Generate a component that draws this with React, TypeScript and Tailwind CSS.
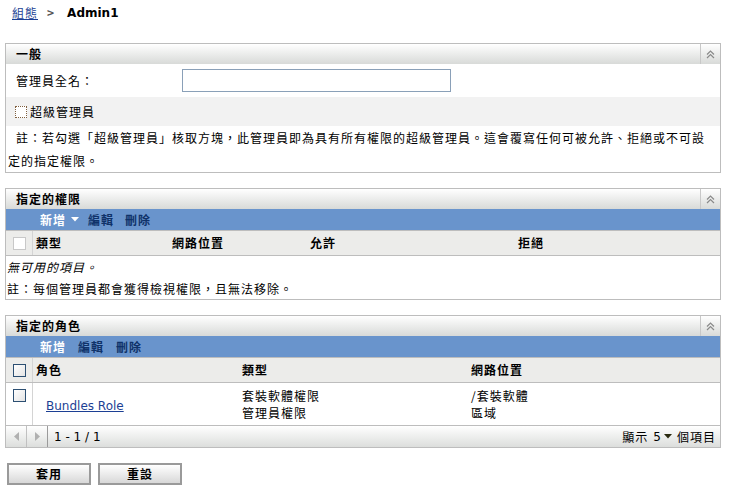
// Admin detail page — general info, assigned rights and assigned roles panels
import type { ReactNode } from 'react'

const font = { fontFamily: '"Noto Sans CJK TC", "Liberation Sans", sans-serif' }
const latin = { fontFamily: '"DejaVu Sans", sans-serif', letterSpacing: 0 }

function CollapseButton() {
  return (
    <div className="flex w-[20px] items-center justify-center self-stretch border-l border-[#c8c8c8]">
      <svg width="9" height="9" viewBox="0 0 9 9" fill="none" stroke="#8a8a8a" strokeWidth="1.2">
        <path d="M1 4.5 L4.5 1 L8 4.5" />
        <path d="M1 8 L4.5 4.5 L8 8" />
      </svg>
    </div>
  )
}

function Panel({ title, children }: { title: string; children: ReactNode }) {
  return (
    <section className="ml-[5px] mr-[9px] border border-[#bdbdbd] bg-white">
      <div className="flex h-[20px] items-center bg-gradient-to-b from-white to-[#d8dad8]">
        <h3 className="flex-1 pl-[10px] text-[12px] font-bold text-black">{title}</h3>
        <CollapseButton />
      </div>
      {children}
    </section>
  )
}

function Box({ tone = 'gray' }: { tone?: 'gray' | 'blue' }) {
  return (
    <span
      className={
        tone === 'blue'
          ? 'block h-[13px] w-[13px] border border-[#2c4f72] bg-gradient-to-br from-white to-[#e4e4e4]'
          : 'block h-[13px] w-[13px] border border-[#c8c8c8] bg-white'
      }
    />
  )
}

function Toolbar({ dropdown }: { dropdown?: boolean }) {
  return (
    <div className="flex h-[22px] items-center border-b border-[#bdbdbd] bg-[#6994cc] pl-[34px] text-[12px] font-bold tracking-[1px]">
      <span className="text-white">新增</span>
      {dropdown && (
        <svg className="ml-[5px]" width="8" height="5" viewBox="0 0 8 5">
          <path d="M0 0 H8 L4 4.5 Z" fill="#fff" />
        </svg>
      )}
      <span className={dropdown ? 'ml-[9px] text-[#0f3269]' : 'ml-[12px] text-[#0f3269]'}>編輯</span>
      <span className={dropdown ? 'ml-[11px] text-[#0f3269]' : 'ml-[12px] text-[#0f3269]'}>刪除</span>
    </div>
  )
}

export default function App() {
  return (
    <div className="min-h-[495px] w-[730px] bg-white pt-[4px] text-[12px] tracking-[1px] text-black" style={font}>
      <div className="flex items-center pl-[12px] leading-[18px]">
        <a className="text-[#1c3f94] underline">組態</a>
        <span className="ml-[9px] text-[#555] font-bold">&gt;</span>
        <span className="ml-[12px] font-bold" style={latin}>
          Admin1
        </span>
      </div>

      <div className="mt-[21px]">
        <Panel title="一般">
          <div className="flex h-[33px] items-center">
            <span className="w-[176px] pl-[10px]">管理員全名：</span>
            <input className="h-[23px] w-[269px] border border-[#8aa0b8] bg-white outline-none" />
          </div>
          <div className="flex h-[29px] items-center gap-[3px] bg-[#f2f2f2] pl-[9px]">
            <span className="block h-[12px] w-[12px] border border-dotted border-[#806040] bg-white" />
            <span>超級管理員</span>
          </div>
          <p className="leading-[23px]">
            <span className="block whitespace-nowrap pl-[10px]">
              註：若勾選「超級管理員」核取方塊，此管理員即為具有所有權限的超級管理員。這會覆寫任何可被允許、拒絕或不可設
            </span>
            <span className="block pl-[2px]">定的指定權限。</span>
          </p>
        </Panel>
      </div>

      <div className="mt-[15px]">
        <Panel title="指定的權限">
          <Toolbar dropdown />
          <div className="grid h-[25px] grid-cols-[27px_136px_138px_138px_1fr] items-center border-b border-[#bdbdbd] bg-[#ececea] font-bold">
            <span className="flex h-full items-center justify-center border-r border-[#d4d4d4]">
              <Box />
            </span>
            <span className="pl-[3px]">類型</span>
            <span className="pl-[3px]">網路位置</span>
            <span className="pl-[3px]">允許</span>
            <span className="pl-[73px]">拒絕</span>
          </div>
          <div className="pl-[1px]">
            <p className="h-[22px] leading-[22px] italic">無可用的項目。</p>
            <p className="h-[21px] leading-[21px]">註：每個管理員都會獲得檢視權限，且無法移除。</p>
          </div>
        </Panel>
      </div>

      <div className="mt-[15px]">
        <Panel title="指定的角色">
          <Toolbar />
          <div className="grid h-[25px] grid-cols-[27px_205px_229px_1fr] items-center border-b border-[#bdbdbd] bg-[#ececea] font-bold">
            <span className="flex h-full items-center justify-center border-r border-[#d4d4d4]">
              <Box tone="blue" />
            </span>
            <span className="pl-[3px]">角色</span>
            <span className="pl-[4px]">類型</span>
            <span className="pl-[4px]">網路位置</span>
          </div>
          <div className="grid h-[43px] grid-cols-[27px_205px_229px_1fr] border-b border-[#bdbdbd]">
            <span className="flex justify-center border-r border-[#d4d4d4] pt-[6px]">
              <Box tone="blue" />
            </span>
            <span className="flex items-center pl-[13px] pt-[3px]">
              <a className="text-[#1c3f94] underline" style={latin}>
                Bundles Role
              </a>
            </span>
            <span className="flex flex-col justify-center pl-[4px] leading-[17px]">
              <span>套裝軟體權限</span>
              <span>管理員權限</span>
            </span>
            <span className="flex flex-col justify-center pl-[4px] leading-[17px]">
              <span>/套裝軟體</span>
              <span>區域</span>
            </span>
          </div>
          <div className="flex h-[21px] items-center bg-gradient-to-b from-white to-[#dcdedc]">
            <span className="flex h-full w-[21px] items-center justify-center border-r border-[#c0c0c0]">
              <svg width="5" height="9" viewBox="0 0 5 9">
                <path d="M5 0 V9 L0 4.5 Z" fill="#b0b0b0" />
              </svg>
            </span>
            <span className="flex h-full w-[21px] items-center justify-center border-r border-[#9a9a9a]">
              <svg width="5" height="9" viewBox="0 0 5 9">
                <path d="M0 0 V9 L5 4.5 Z" fill="#b0b0b0" />
              </svg>
            </span>
            <span className="pl-[6px]" style={latin}>
              1 - 1 / 1
            </span>
            <span className="ml-auto flex items-center gap-[5px] pr-[4px]">
              顯示
              <span className="flex items-center gap-[3px]" style={latin}>
                5
                <svg width="8" height="5" viewBox="0 0 8 5">
                  <path d="M0 0 H8 L4 4.5 Z" fill="#2a2a10" />
                </svg>
              </span>
              個項目
            </span>
          </div>
        </Panel>
      </div>

      <div className="mt-[15px] flex gap-[7px] pl-[7px]">
        <button className="h-[22px] w-[84px] border-2 border-[#9a9a9a] bg-gradient-to-b from-white to-[#d8d8d8] text-[12px] font-bold tracking-[1px]">
          套用
        </button>
        <button className="h-[22px] w-[84px] border-2 border-[#9a9a9a] bg-gradient-to-b from-white to-[#d8d8d8] text-[12px] font-bold tracking-[1px]">
          重設
        </button>
      </div>
    </div>
  )
}
